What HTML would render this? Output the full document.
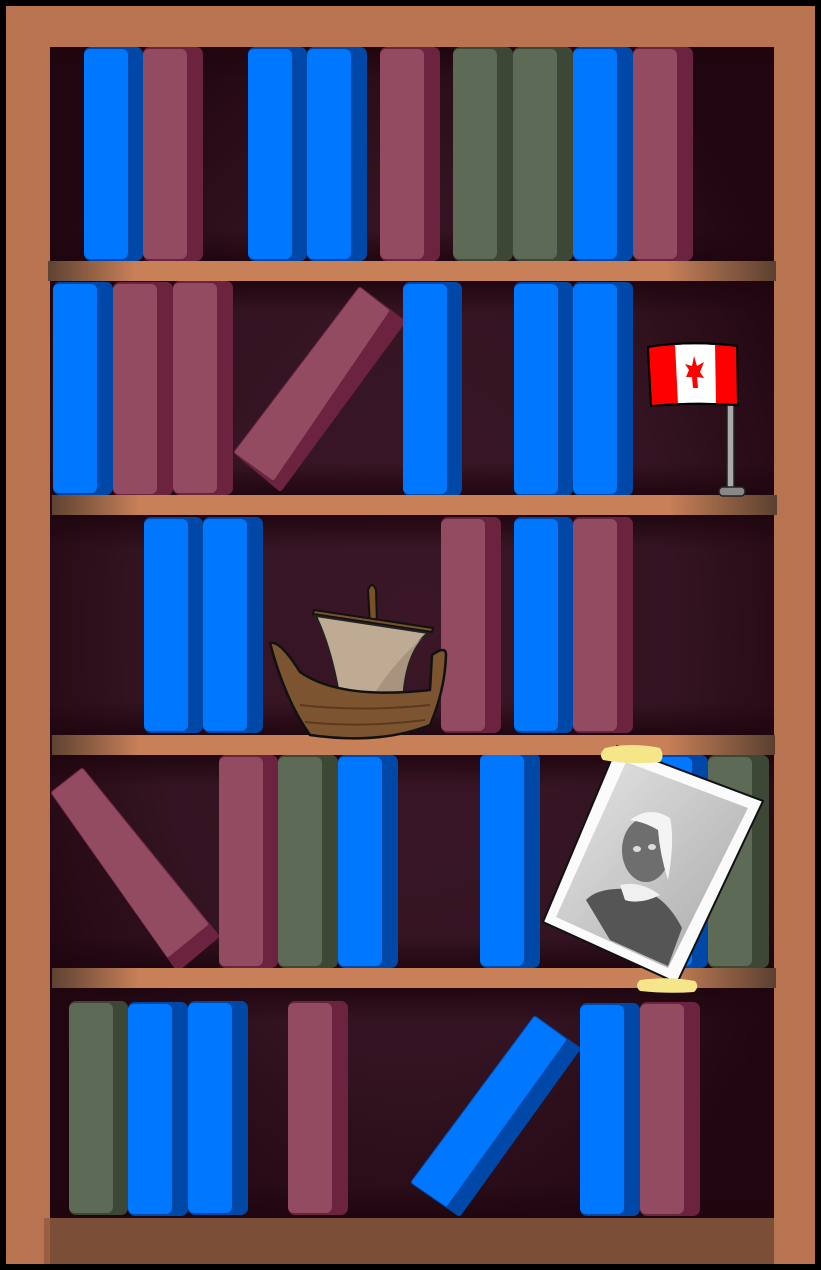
<!DOCTYPE html>
<html><head><meta charset="utf-8"><style>html,body{margin:0;padding:0;background:#000}svg{display:block}</style></head>
<body>
<svg width="821" height="1270" viewBox="0 0 821 1270" xmlns="http://www.w3.org/2000/svg">
<defs>
<radialGradient id="bg" cx="50%" cy="50%" r="60%">
<stop offset="0" stop-color="#3a1626"/><stop offset="0.6" stop-color="#341422"/><stop offset="1" stop-color="#200610"/>
</radialGradient>
<linearGradient id="rowv" x1="0" y1="0" x2="0" y2="1">
<stop offset="0" stop-color="#1e050e" stop-opacity="0.9"/><stop offset="0.15" stop-color="#1e050e" stop-opacity="0"/><stop offset="0.85" stop-color="#1e050e" stop-opacity="0"/><stop offset="1" stop-color="#1e050e" stop-opacity="0.9"/>
</linearGradient>
<linearGradient id="shelf" x1="0" y1="0" x2="1" y2="0">
<stop offset="0" stop-color="#5e4232"/><stop offset="0.12" stop-color="#c88058"/><stop offset="0.85" stop-color="#c88058"/><stop offset="1" stop-color="#5a4030"/>
</linearGradient>
<linearGradient id="photo" x1="0" y1="0" x2="1" y2="1">
<stop offset="0" stop-color="#e6e6e6"/><stop offset="1" stop-color="#a8a8a8"/>
</linearGradient>
</defs>
<rect x="0" y="0" width="821" height="1270" fill="#000"/>
<rect x="6" y="6" width="809" height="1258" fill="#b87450"/>
<rect x="50" y="47" width="724" height="1172" fill="url(#bg)"/>
<rect x="50" y="47" width="724" height="214" fill="url(#rowv)"/>
<rect x="50" y="281" width="724" height="214" fill="url(#rowv)"/>
<rect x="50" y="515" width="724" height="220" fill="url(#rowv)"/>
<rect x="50" y="755" width="724" height="213" fill="url(#rowv)"/>
<rect x="50" y="988" width="724" height="230" fill="url(#rowv)"/>

<g id="books">
<g><rect x="84" y="47" width="59" height="214" rx="7" fill="#0048a8"/><rect x="84" y="49" width="44" height="210" rx="6" fill="#0077ff"/></g>
<g><rect x="143" y="47" width="60" height="214" rx="7" fill="#6c2340"/><rect x="143" y="49" width="44" height="210" rx="6" fill="#934b62"/></g>
<g><rect x="248" y="47" width="59" height="214" rx="7" fill="#0048a8"/><rect x="248" y="49" width="44" height="210" rx="6" fill="#0077ff"/></g>
<g><rect x="307" y="47" width="60" height="214" rx="7" fill="#0048a8"/><rect x="307" y="49" width="44" height="210" rx="6" fill="#0077ff"/></g>
<g><rect x="380" y="47" width="60" height="214" rx="7" fill="#6c2340"/><rect x="380" y="49" width="44" height="210" rx="6" fill="#934b62"/></g>
<g><rect x="453" y="47" width="60" height="214" rx="7" fill="#3c4735"/><rect x="453" y="49" width="44" height="210" rx="6" fill="#5d6a55"/></g>
<g><rect x="513" y="47" width="60" height="214" rx="7" fill="#3c4735"/><rect x="513" y="49" width="44" height="210" rx="6" fill="#5d6a55"/></g>
<g><rect x="573" y="47" width="60" height="214" rx="7" fill="#0048a8"/><rect x="573" y="49" width="44" height="210" rx="6" fill="#0077ff"/></g>
<g><rect x="633" y="47" width="60" height="214" rx="7" fill="#6c2340"/><rect x="633" y="49" width="44" height="210" rx="6" fill="#934b62"/></g>

<g><rect x="53" y="282" width="60" height="213" rx="7" fill="#0048a8"/><rect x="53" y="284" width="44" height="209" rx="6" fill="#0077ff"/></g>
<g><rect x="113" y="282" width="60" height="214" rx="7" fill="#6c2340"/><rect x="113" y="284" width="44" height="210" rx="6" fill="#934b62"/></g>
<g><rect x="173" y="281" width="60" height="214" rx="7" fill="#6c2340"/><rect x="173" y="283" width="44" height="210" rx="6" fill="#934b62"/></g>
<polygon points="360,290 402,322 280,488 237,452" fill="#6c2340" stroke="#6c2340" stroke-width="6" stroke-linejoin="round"/>
<polygon points="360,290 387,311 273,478 237,452" fill="#934b62" stroke="#934b62" stroke-width="4" stroke-linejoin="round"/>
<g><rect x="403" y="282" width="59" height="214" rx="7" fill="#0048a8"/><rect x="403" y="284" width="44" height="210" rx="6" fill="#0077ff"/></g>
<g><rect x="514" y="282" width="59" height="214" rx="7" fill="#0048a8"/><rect x="514" y="284" width="44" height="210" rx="6" fill="#0077ff"/></g>
<g><rect x="573" y="282" width="60" height="214" rx="7" fill="#0048a8"/><rect x="573" y="284" width="44" height="210" rx="6" fill="#0077ff"/></g>

<g><rect x="144" y="517" width="59" height="216" rx="7" fill="#0048a8"/><rect x="144" y="519" width="44" height="212" rx="6" fill="#0077ff"/></g>
<g><rect x="203" y="517" width="60" height="216" rx="7" fill="#0048a8"/><rect x="203" y="519" width="44" height="212" rx="6" fill="#0077ff"/></g>
<g><rect x="441" y="517" width="60" height="216" rx="7" fill="#6c2340"/><rect x="441" y="519" width="44" height="212" rx="6" fill="#934b62"/></g>
<g><rect x="514" y="517" width="59" height="216" rx="7" fill="#0048a8"/><rect x="514" y="519" width="44" height="212" rx="6" fill="#0077ff"/></g>
<g><rect x="573" y="517" width="60" height="216" rx="7" fill="#6c2340"/><rect x="573" y="519" width="44" height="212" rx="6" fill="#934b62"/></g>

<polygon points="54,793 82,771 216,936 178,968" fill="#6c2340" stroke="#6c2340" stroke-width="6" stroke-linejoin="round"/>
<polygon points="54,793 82,771 206,924 168,955" fill="#934b62" stroke="#934b62" stroke-width="4" stroke-linejoin="round"/>
<g><rect x="219" y="755" width="59" height="213" rx="7" fill="#6c2340"/><rect x="219" y="757" width="44" height="209" rx="6" fill="#934b62"/></g>
<g><rect x="278" y="755" width="60" height="213" rx="7" fill="#3c4735"/><rect x="278" y="757" width="44" height="209" rx="6" fill="#5d6a55"/></g>
<g><rect x="338" y="755" width="60" height="213" rx="7" fill="#0048a8"/><rect x="338" y="757" width="44" height="209" rx="6" fill="#0077ff"/></g>
<g><rect x="480" y="753" width="60" height="215" rx="7" fill="#0048a8"/><rect x="480" y="755" width="44" height="211" rx="6" fill="#0077ff"/></g>
<g><rect x="650" y="755" width="58" height="213" rx="7" fill="#0048a8"/><rect x="650" y="757" width="42" height="209" rx="6" fill="#0077ff"/></g>
<g><rect x="708" y="755" width="61" height="213" rx="7" fill="#3c4735"/><rect x="708" y="757" width="44" height="209" rx="6" fill="#5d6a55"/></g>

<g><rect x="69" y="1001" width="59" height="214" rx="7" fill="#3c4735"/><rect x="69" y="1003" width="44" height="210" rx="6" fill="#5d6a55"/></g>
<g><rect x="128" y="1002" width="60" height="214" rx="7" fill="#0048a8"/><rect x="128" y="1004" width="44" height="210" rx="6" fill="#0077ff"/></g>
<g><rect x="188" y="1001" width="60" height="214" rx="7" fill="#0048a8"/><rect x="188" y="1003" width="44" height="210" rx="6" fill="#0077ff"/></g>
<g><rect x="288" y="1001" width="60" height="214" rx="7" fill="#6c2340"/><rect x="288" y="1003" width="44" height="210" rx="6" fill="#934b62"/></g>
<polygon points="535,1019 577,1049 459,1213 414,1182" fill="#0048a8" stroke="#0048a8" stroke-width="6" stroke-linejoin="round"/>
<polygon points="535,1019 564,1040 446,1204 414,1182" fill="#0077ff" stroke="#0077ff" stroke-width="4" stroke-linejoin="round"/>
<g><rect x="580" y="1003" width="60" height="213" rx="7" fill="#0048a8"/><rect x="580" y="1005" width="44" height="209" rx="6" fill="#0077ff"/></g>
<g><rect x="640" y="1002" width="60" height="214" rx="7" fill="#6c2340"/><rect x="640" y="1004" width="44" height="210" rx="6" fill="#934b62"/></g>
</g>

<rect x="48" y="261" width="728" height="20" fill="url(#shelf)"/>
<rect x="52" y="495" width="725" height="20" fill="url(#shelf)"/>
<rect x="52" y="735" width="723" height="20" fill="url(#shelf)"/>
<rect x="52" y="968" width="724" height="20" fill="url(#shelf)"/>
<rect x="50" y="1218" width="724" height="46" fill="#7a4e37"/>
<polygon points="44,1218 50,1218 50,1264 44,1264" fill="#9a5f42"/>

<rect x="727" y="405" width="7" height="88" fill="#aaa" stroke="#222" stroke-width="1.5"/>
<rect x="719" y="487" width="26" height="9" rx="4" fill="#888" stroke="#222" stroke-width="1.5"/>
<path d="M648,347 Q690,340 737,346 L738,405 Q692,402 651,406 Z" fill="#fff" stroke="#000" stroke-width="2"/>
<path d="M648,347 Q660,345 675,344 L678,404 Q664,404 651,406 Z" fill="#f00"/>
<path d="M715,344 Q727,345 737,346 L738,405 Q728,404 716,403 Z" fill="#f00"/>
<path d="M648,347 Q690,340 737,346 L738,405 Q692,402 651,406 Z" fill="none" stroke="#000" stroke-width="2"/>
<path d="M694,356 L697,366 L704,362 L700,372 L704,378 L697,377 L698,388 L693,388 L692,377 L686,377 L689,370 L685,364 L692,366 Z" fill="#f00"/>

<path d="M368,590 Q372,580 376,590 L377,625 L370,625 Z" fill="#7a5028" stroke="#111" stroke-width="2"/>
<path d="M314,610 L433,628 L432,632 L313,614 Z" fill="#7a5028" stroke="#111" stroke-width="2"/>
<path d="M316,616 L428,633 Q405,650 402,700 L340,700 Q332,650 316,616 Z" fill="#bfab94" stroke="#222" stroke-width="2"/>
<path d="M428,633 Q405,650 402,700 L370,700 Q395,660 428,633 Z" fill="#a8947e"/>
<path d="M270,643 Q280,640 300,672 Q340,700 430,690 L432,655 Q446,645 446,655 Q445,690 430,725 Q380,745 310,735 Q285,700 270,643 Z" fill="#7d5430" stroke="#111" stroke-width="2.5" stroke-linejoin="round"/>
<path d="M300,705 Q360,712 430,705 M305,722 Q360,728 425,720" stroke="#5a3a1e" stroke-width="2" fill="none"/>

<polygon points="617,746 763,801 677,983 543,922" fill="#fbfbfb" stroke="#111" stroke-width="2"/>
<polygon points="626,762 748,808 668,968 556,917" fill="url(#photo)"/>
<ellipse cx="646" cy="850" rx="24" ry="32" fill="#6e6e6e"/>
<ellipse cx="637" cy="849" rx="4" ry="3" fill="#ddd"/><ellipse cx="652" cy="847" rx="4" ry="3" fill="#ddd"/>
<path d="M630,820 Q650,805 670,818 Q675,840 668,880 Q660,855 658,830 Q645,822 630,820 Z" fill="#f4f4f4"/>
<path d="M586,900 Q600,885 640,890 Q665,895 682,928 L668,966 L610,940 Z" fill="#555"/>
<path d="M620,885 Q640,880 660,895 Q640,905 625,900 Z" fill="#f0f0f0"/>
<path d="M605,748 Q630,742 660,748 Q665,756 660,762 Q630,765 603,760 Q598,754 605,748 Z" fill="#f5e68a"/>
<path d="M640,980 Q670,976 695,981 Q700,987 694,992 Q668,994 640,991 Q634,986 640,980 Z" fill="#f5e68a"/>
</svg>
</body></html>
